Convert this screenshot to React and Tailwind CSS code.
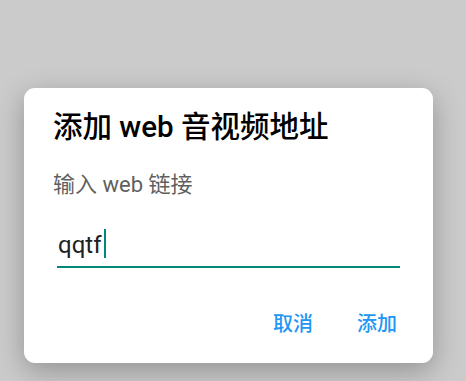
export default function App() {
  const font = { fontFamily: 'Roboto, "Noto Sans CJK SC", sans-serif' };
  return (
    <div className="min-h-[381px] bg-[#cbcbcb] pl-[24px] pt-[88px]" style={font}>
      <div className="w-[409px] h-[275px] bg-white rounded-[11px] shadow-[0_8px_28px_rgba(0,0,0,0.28)] flex flex-col">
        <div className="pl-[29px] pt-[22px] text-[29.5px] leading-[34px] font-medium text-black">
          添加 web 音视频地址
        </div>
        <div className="pl-[29px] mt-[27px] text-[22px] leading-[28px] text-[#5f5f5f]">
          输入 web 链接
        </div>
        <div className="mx-[33px] mt-[30px] border-b-2 border-[#00897b] flex items-end pb-[6px] pl-[1px]">
          <span className="text-[24px] leading-[30px] text-[#212121]">qqtf</span>
          <span className="ml-[3px] mb-[2px] w-[2px] h-[29px] bg-[#00897b]"></span>
        </div>
        <div className="flex justify-end pr-[28px] mt-[44px] gap-[28px]">
          <button className="px-[8px] text-[20px] leading-[24px] font-medium text-[#2196f3]">取消</button>
          <button className="px-[8px] text-[20px] leading-[24px] font-medium text-[#2196f3]">添加</button>
        </div>
      </div>
    </div>
  );
}
